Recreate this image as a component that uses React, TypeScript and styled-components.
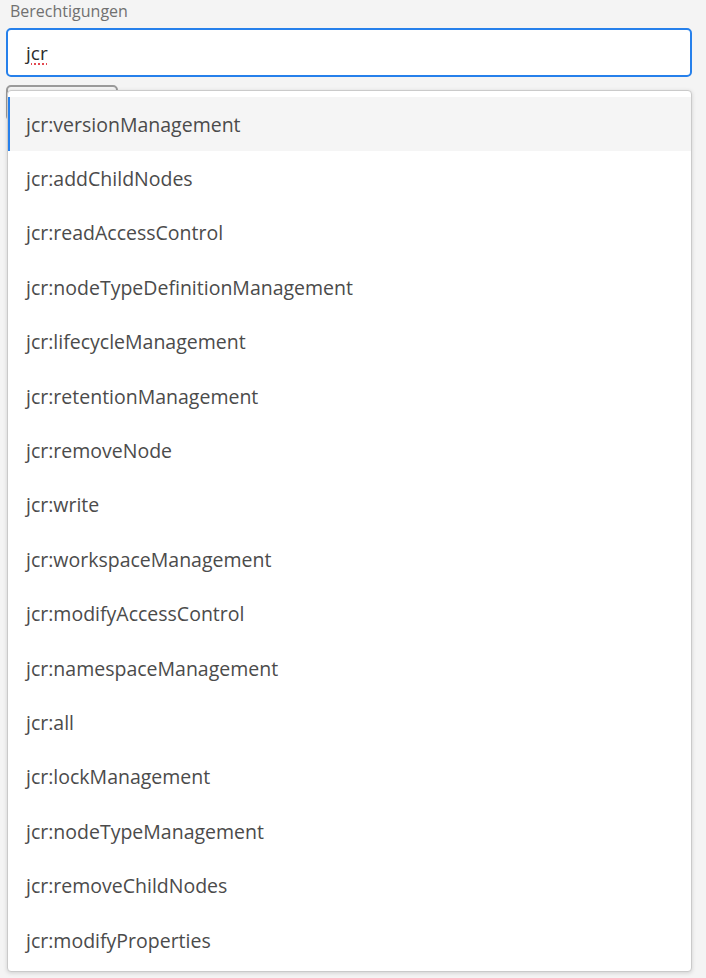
import styled, { createGlobalStyle } from "styled-components";

const privileges = [
  "jcr:versionManagement",
  "jcr:addChildNodes",
  "jcr:readAccessControl",
  "jcr:nodeTypeDefinitionManagement",
  "jcr:lifecycleManagement",
  "jcr:retentionManagement",
  "jcr:removeNode",
  "jcr:write",
  "jcr:workspaceManagement",
  "jcr:modifyAccessControl",
  "jcr:namespaceManagement",
  "jcr:all",
  "jcr:lockManagement",
  "jcr:nodeTypeManagement",
  "jcr:removeChildNodes",
  "jcr:modifyProperties",
];

const GlobalStyle = createGlobalStyle`
  html, body {
    margin: 0;
    background: #f4f4f4;
    font-family: "Open Sans", "Noto Sans", sans-serif;
  }
  #root {
    min-height: 978px;
  }
`;

const Field = styled.div`
  padding: 0 14px 0 6px;
`;

const Label = styled.div`
  font-size: 16px;
  line-height: 23px;
  color: #707070;
  padding: 0 0 0 4px;
  height: 28px;
`;

const Input = styled.div`
  height: 45px;
  border: 2px solid #2680eb;
  border-radius: 5px;
  background: #fff;
  display: flex;
  align-items: center;
  padding-left: 18px;
  font-size: 19px;
  color: #2c2c2c;
`;

const Misspelled = styled.span`
  text-decoration: underline dotted #e34850;
  text-decoration-thickness: 2px;
  text-underline-offset: 4px;
`;

/* button and popover share one grid cell so the menu covers the button */
const Stack = styled.div`
  display: grid;
  margin-top: 8px;
  & > * {
    grid-area: 1 / 1;
  }
`;

const AddButton = styled.div`
  align-self: start;
  width: 108px;
  height: 32px;
  border: 2px solid #9a9a9a;
  border-radius: 5px;
  background: #f4f4f4;
`;

const Popover = styled.div`
  margin: 5px 0 0 1px;
  background: #fff;
  border: 1px solid #cacaca;
  border-radius: 4px;
  box-shadow: 0 1px 4px rgba(0, 0, 0, 0.15);
  padding: 6px 0 4px;
`;

const Item = styled.div<{ $active?: boolean }>`
  height: 54.4px;
  display: flex;
  align-items: center;
  padding-left: 16px;
  font-size: 19.5px;
  color: #4b4b4b;
  background: ${({ $active }) => ($active ? "#f5f5f5" : "transparent")};
  border-left: 2px solid ${({ $active }) => ($active ? "#2680eb" : "transparent")};
`;

export default function App() {
  return (
    <>
      <GlobalStyle />
      <Field>
        <Label>Berechtigungen</Label>
        <Input>
          <Misspelled>jcr</Misspelled>
        </Input>
        <Stack>
          <AddButton />
          <Popover>
            {privileges.map((p, i) => (
              <Item key={p} $active={i === 0}>
                {p}
              </Item>
            ))}
          </Popover>
        </Stack>
      </Field>
    </>
  );
}
